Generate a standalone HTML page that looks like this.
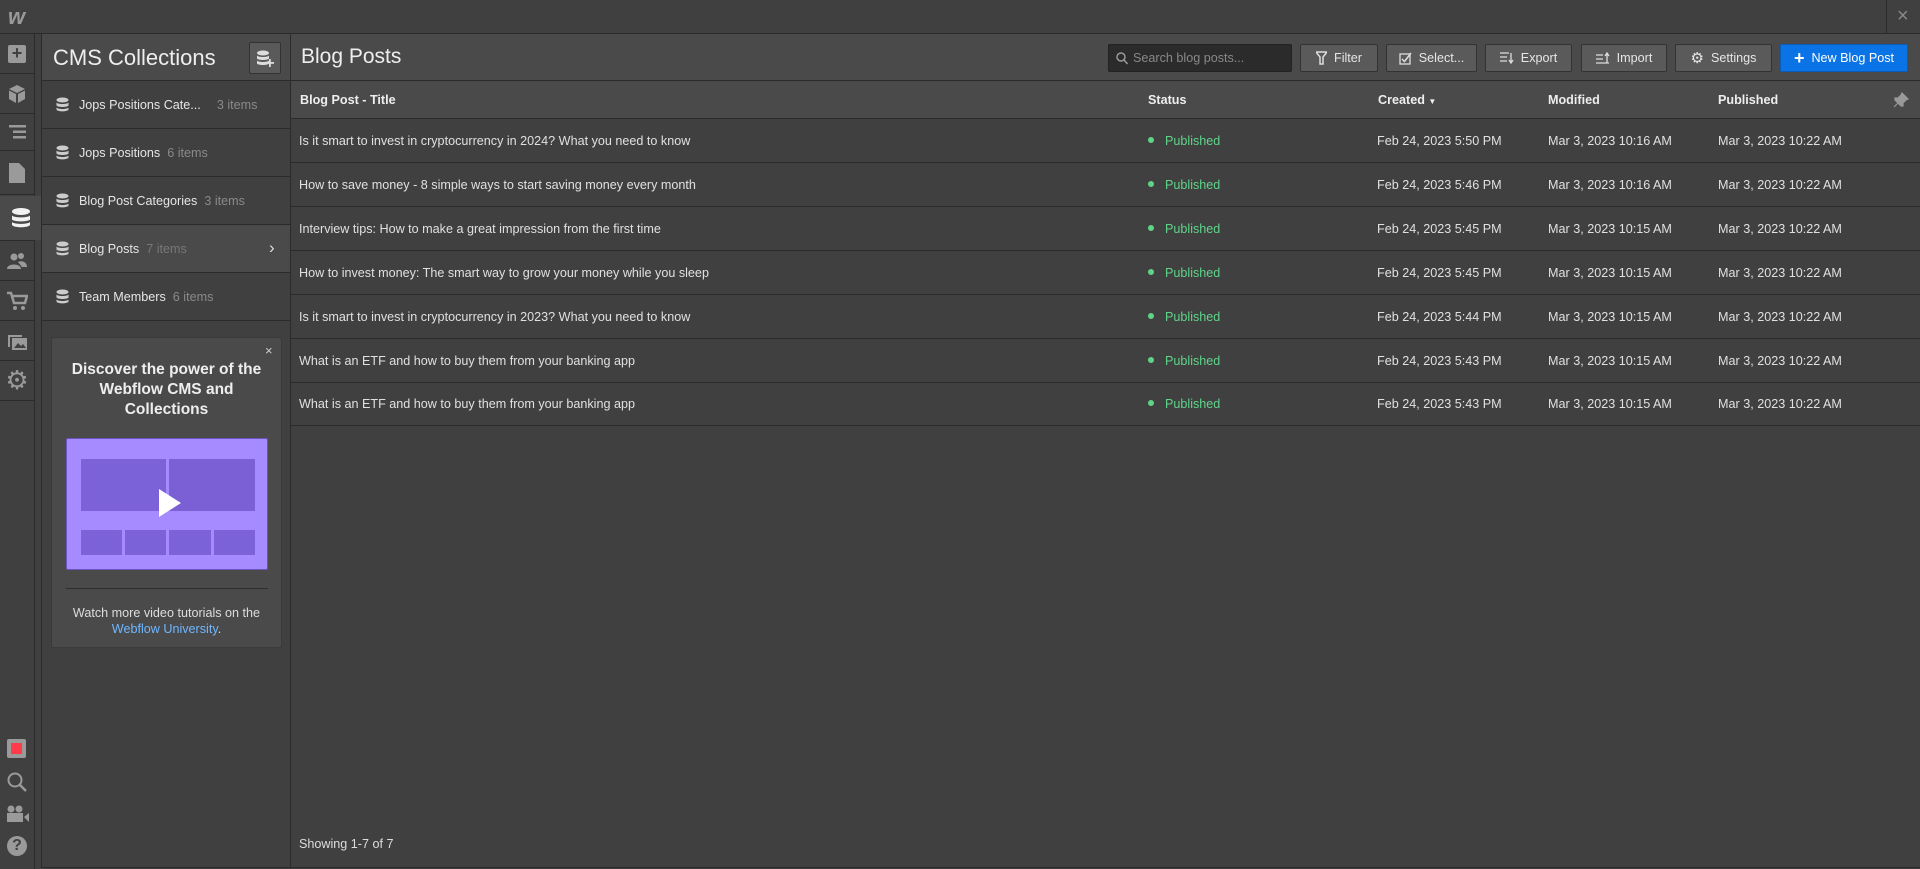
<!DOCTYPE html>
<html><head><meta charset="utf-8"><style>
*{box-sizing:border-box;margin:0;padding:0}
body{width:1920px;height:869px;overflow:hidden;background:#404040;font-family:"Liberation Sans",sans-serif;color:#e0e0e0;position:relative}
.abs{position:absolute}
.top{left:0;top:0;width:1920px;height:34px;background:#404040;border-bottom:1px solid #2b2b2b}
.lbar{left:0;top:34px;width:35px;height:835px;background:#404040;border-right:1px solid #2b2b2b}
.ic{position:absolute;left:0;width:34px;height:40px;border-bottom:1px solid #2b2b2b;display:flex;align-items:center;justify-content:center}
.side{left:41px;top:34px;width:250px;height:834px;background:#404040;border-left:1px solid #2b2b2b;border-right:1px solid #2b2b2b;border-bottom:1px solid #2b2b2b}
.sh{height:47px;background:#4a4a4a;border-bottom:1px solid #2b2b2b;position:relative}
.it{height:48px;border-bottom:1px solid #2b2b2b;display:flex;align-items:center;padding-left:14px;font-size:12.6px;color:#e6e6e6;position:relative}
.it .c{color:#8a8a8a;margin-left:7px}
.it svg{margin-right:10px}
.main{left:291px;top:34px;width:1629px;height:834px;border-bottom:1px solid #2b2b2b}
.mh{height:47px;background:#4a4a4a;border-bottom:1px solid #2b2b2b;position:relative}
.btn{position:absolute;top:10px;height:28px;background:#5a5a5a;border:1px solid #333;border-radius:2px;font-size:12.6px;color:#e6e6e6;display:flex;align-items:center;justify-content:center;gap:7px}
.th{height:38px;background:#4a4a4a;border-bottom:1px solid #2b2b2b;position:relative;font-size:12.6px;font-weight:bold;color:#eee}
.row{height:44px;border-bottom:1px solid #2b2b2b;position:relative;font-size:12.6px;color:#e0e0e0}
.th span,.row span{position:absolute;top:50%;transform:translateY(-50%);white-space:nowrap}
.pub{color:#5fd38a}
.pub:before{content:"";display:inline-block;width:6px;height:6px;border-radius:3px;background:#5fd38a;margin-right:11px;vertical-align:2px}
</style></head><body>
<div class="abs top">
 <div class="abs" style="left:8px;top:4px;font:italic bold 22px 'Liberation Sans',sans-serif;color:#9a9a9a">w</div>
 <div class="abs" style="left:1886px;top:0;width:1px;height:34px;background:#2b2b2b"></div>
 <div class="abs" style="left:1897px;top:5px;color:#8a8a8a;font-size:20px">×</div>
</div>
<div class="abs lbar">
 <div class="ic" style="top:0"><div style="width:18px;height:18px;background:#9a9a9a;border-radius:2px;color:#404040;font-weight:bold;font-size:18px;line-height:17px;text-align:center">+</div></div>
 <div class="ic" style="top:40px"><svg width="20" height="20" viewBox="0 0 20 20"><path d="M10 1 L18 5 L10 9 L2 5Z M2 6.5 L9 10 V19 L2 15Z M18 6.5 L11 10 V19 L18 15Z" fill="#9a9a9a"/></svg></div>
 <div class="ic" style="top:80px;height:37px"><svg width="20" height="16"><rect x="2" y="1" width="17" height="2.5" fill="#9a9a9a"/><rect x="6" y="6.5" width="13" height="2.5" fill="#9a9a9a"/><rect x="6" y="12" width="13" height="2.5" fill="#9a9a9a"/></svg></div>
 <div class="ic" style="top:117px;height:44px"><svg width="18" height="22"><path d="M1 1H11L17 7V21H1Z" fill="#9a9a9a"/></svg></div>
 <div class="ic" style="top:162px;height:44px;background:#4a4a4a;width:41px;border:none"><svg width="22" height="22"><g fill="#f2f2f2"><ellipse cx="11" cy="4.5" rx="9" ry="3.5"/><path d="M2 8.5c2 2.5 16 2.5 18 0v4c-2 2.5-16 2.5-18 0z"/><path d="M2 15c2 2.5 16 2.5 18 0v3c-2 3-16 3-18 0z"/></g></svg></div>
 <div class="ic" style="top:206px;height:41px;border-top:1px solid #2b2b2b"><svg width="22" height="18"><g fill="#9a9a9a"><circle cx="8" cy="5" r="3.5"/><circle cx="15" cy="4" r="3"/><path d="M1 17c0-6 14-6 14 0z"/><path d="M12 10c4-2 9 0 9 5h-5z"/></g></svg></div>
 <div class="ic" style="top:247px"><svg width="22" height="20"><path d="M1 2h4l3 10h11l2-7H6" fill="none" stroke="#9a9a9a" stroke-width="2.5"/><circle cx="9" cy="17" r="2" fill="#9a9a9a"/><circle cx="17" cy="17" r="2" fill="#9a9a9a"/></svg></div>
 <div class="ic" style="top:287px"><svg width="22" height="20"><path d="M2 4h14v2H4v10H2z" fill="#9a9a9a"/><rect x="6" y="7" width="15" height="12" fill="#9a9a9a"/><path d="M8 17l4-5 3 3 2-2 3 4z" fill="#404040"/></svg></div>
 <div class="ic" style="top:327px;font-size:26px;color:#9a9a9a">⚙</div>
 <div class="abs" style="left:7px;top:705px;width:19px;height:19px;background:#9a9a9a;border-radius:2px"><div style="margin:4px;width:11px;height:11px;background:#ff3b4a"></div></div>
 <svg class="abs" style="left:6px;top:737px" width="22" height="22"><circle cx="9" cy="9" r="6.5" fill="none" stroke="#9a9a9a" stroke-width="2"/><path d="M14 14l6 6" stroke="#9a9a9a" stroke-width="2.5"/></svg>
 <svg class="abs" style="left:6px;top:771px" width="24" height="18"><g fill="#9a9a9a"><circle cx="5" cy="4" r="3.5"/><circle cx="13" cy="4" r="3.5"/><rect x="1" y="8" width="16" height="9"/><path d="M18 12l5-4v9z"/></g></svg>
 <div class="abs" style="left:7px;top:802px;width:20px;height:20px;border-radius:10px;background:#9a9a9a;color:#404040;font-weight:bold;font-size:16px;text-align:center;line-height:20px">?</div>
</div>
<div class="abs side">
 <div class="sh"><div class="abs" style="left:11px;top:11px;font-size:22px;color:#eee">CMS Collections</div>
 <div class="abs" style="left:207px;top:8px;width:32px;height:32px;background:#5a5a5a;border:1px solid #333;border-radius:2px"><svg style="margin:7px 0 0 6px" width="20" height="18"><g fill="#ddd"><ellipse cx="7" cy="3" rx="6" ry="2.5"/><path d="M1 5.5c1 2 11 2 12 0v3c-1 2-11 2-12 0z"/><path d="M1 10.5c1 2 11 2 12 0v3c-1 2-11 2-12 0z"/><rect x="13" y="9" width="1.8" height="8"/><rect x="10" y="12" width="8" height="1.8"/></g></svg></div></div>
 <div class="it"><svg width="13" height="15"><g fill="#ccc"><ellipse cx="6.5" cy="3" rx="6" ry="2.5"/><path d="M.5 5.5c1 2 11 2 12 0v3c-1 2-11 2-12 0z"/><path d="M.5 10.5c1 2 11 2 12 0v2c-1 2.5-11 2.5-12 0z"/></g></svg>Jops Positions Cate...<span class="c" style="margin-left:16px">3 items</span></div>
 <div class="it"><svg width="13" height="15"><g fill="#ccc"><ellipse cx="6.5" cy="3" rx="6" ry="2.5"/><path d="M.5 5.5c1 2 11 2 12 0v3c-1 2-11 2-12 0z"/><path d="M.5 10.5c1 2 11 2 12 0v2c-1 2.5-11 2.5-12 0z"/></g></svg>Jops Positions<span class="c">6 items</span></div>
 <div class="it"><svg width="13" height="15"><g fill="#ccc"><ellipse cx="6.5" cy="3" rx="6" ry="2.5"/><path d="M.5 5.5c1 2 11 2 12 0v3c-1 2-11 2-12 0z"/><path d="M.5 10.5c1 2 11 2 12 0v2c-1 2.5-11 2.5-12 0z"/></g></svg>Blog Post Categories<span class="c">3 items</span></div>
 <div class="it" style="background:#4a4a4a"><svg width="13" height="15"><g fill="#ccc"><ellipse cx="6.5" cy="3" rx="6" ry="2.5"/><path d="M.5 5.5c1 2 11 2 12 0v3c-1 2-11 2-12 0z"/><path d="M.5 10.5c1 2 11 2 12 0v2c-1 2.5-11 2.5-12 0z"/></g></svg>Blog Posts<span class="c" style="color:#777">7 items</span><span class="abs" style="left:227px;top:13px;font-size:17px;color:#ddd">›</span></div>
 <div class="it"><svg width="13" height="15"><g fill="#ccc"><ellipse cx="6.5" cy="3" rx="6" ry="2.5"/><path d="M.5 5.5c1 2 11 2 12 0v3c-1 2-11 2-12 0z"/><path d="M.5 10.5c1 2 11 2 12 0v2c-1 2.5-11 2.5-12 0z"/></g></svg>Team Members<span class="c">6 items</span></div>
 <div class="abs" style="left:9px;top:303px;width:231px;height:311px;background:#4a4a4a;border:1px solid #3a3a3a;border-radius:2px">
  <div class="abs" style="left:213px;top:5px;color:#ccc;font-size:13px">×</div>
  <div class="abs" style="left:0;top:22px;width:229px;text-align:center;font-size:15.5px;font-weight:bold;line-height:20px;color:#eee">Discover the power of the<br>Webflow CMS and<br>Collections</div>
  <div class="abs" style="left:14px;top:100px;width:202px;height:132px;background:#a58bff;border:1px solid #6a55c0;border-radius:2px">
   <div class="abs" style="left:14px;top:20px;width:85px;height:52px;background:#7c62d8"></div>
   <div class="abs" style="left:102px;top:20px;width:86px;height:52px;background:#7a60d4"></div>
   <div class="abs" style="left:14px;top:91px;width:41px;height:25px;background:#7c62d8"></div>
   <div class="abs" style="left:58px;top:91px;width:41px;height:25px;background:#7c62d8"></div>
   <div class="abs" style="left:102px;top:91px;width:42px;height:25px;background:#7c62d8"></div>
   <div class="abs" style="left:147px;top:91px;width:41px;height:25px;background:#7c62d8"></div>
   <svg class="abs" style="left:92px;top:50px" width="24" height="30"><path d="M0 0L22 14L0 28Z" fill="#fff"/></svg>
  </div>
  <div class="abs" style="left:14px;top:250px;width:202px;height:1px;background:#2e2e2e"></div>
  <div class="abs" style="left:0;top:267px;width:229px;text-align:center;font-size:12.6px;line-height:16px;color:#ddd">Watch more video tutorials on the<br><span style="color:#6fb6ff">Webflow University</span>.</div>
 </div>
</div>
<div class="abs main">
 <div class="mh"><div class="abs" style="left:10px;top:11px;font-size:21px;color:#eee">Blog Posts</div>
  <div class="abs" style="left:817px;top:10px;width:184px;height:28px;background:#2b2b2b;border:1px solid #222;border-radius:2px;font-size:12.6px;color:#888;padding:6px 0 0 24px">Search blog posts...<svg class="abs" style="left:7px;top:7px" width="12" height="13"><circle cx="5" cy="5" r="4" fill="none" stroke="#999" stroke-width="1.5"/><path d="M8 8l3.5 4" stroke="#999" stroke-width="1.5"/></svg></div>
  <div class="btn" style="left:1009px;width:78px"><svg width="11" height="14"><path d="M0 1h11L7 6v7H4V6z" fill="none" stroke="#ddd" stroke-width="1.5"/></svg>Filter</div>
  <div class="btn" style="left:1095px;width:91px"><svg width="13" height="13"><rect x="1" y="2" width="10" height="10" fill="none" stroke="#ddd" stroke-width="1.3"/><path d="M3 7l2.5 2.5L12 1" fill="none" stroke="#ddd" stroke-width="1.5"/></svg>Select...</div>
  <div class="btn" style="left:1194px;width:87px"><svg width="14" height="12"><path d="M0 1h9M0 5h7M0 9h7M11 1v10M9 8l2 3 2-3" fill="none" stroke="#ddd" stroke-width="1.3"/></svg>Export</div>
  <div class="btn" style="left:1290px;width:86px"><svg width="14" height="12"><path d="M0 11h13M0 7h7M0 3h7M11 11V1M9 4l2-3 2 3" fill="none" stroke="#ddd" stroke-width="1.3"/></svg>Import</div>
  <div class="btn" style="left:1384px;width:97px"><span style="font-size:15px">⚙</span>Settings</div>
  <div class="btn" style="left:1489px;width:128px;background:#0a73e6;border-color:#0a5cb8;color:#fff"><span style="font-size:18px;font-weight:bold">+</span>New Blog Post</div>
 </div>
 <div class="th"><span style="left:9px">Blog Post - Title</span><span style="left:857px">Status</span><span style="left:1087px">Created <small style="font-size:8px">▼</small></span><span style="left:1257px">Modified</span><span style="left:1427px">Published</span><svg class="abs" style="left:1602px;top:11px" width="16" height="16"><path d="M9 1l6 6-2 1-3 3 0 3-2 0-6-6 0-2 3 0 3-3z M5 11l-4 4" fill="#999" stroke="#999" stroke-width="1.2"/></svg></div>
 <div class="row"><span style="left:8px">Is it smart to invest in cryptocurrency in 2024? What you need to know</span><span class="pub" style="left:857px">Published</span><span style="left:1086px">Feb 24, 2023 5:50 PM</span><span style="left:1257px">Mar 3, 2023 10:16 AM</span><span style="left:1427px">Mar 3, 2023 10:22 AM</span></div>
 <div class="row"><span style="left:8px">How to save money - 8 simple ways to start saving money every month</span><span class="pub" style="left:857px">Published</span><span style="left:1086px">Feb 24, 2023 5:46 PM</span><span style="left:1257px">Mar 3, 2023 10:16 AM</span><span style="left:1427px">Mar 3, 2023 10:22 AM</span></div>
 <div class="row"><span style="left:8px">Interview tips: How to make a great impression from the first time</span><span class="pub" style="left:857px">Published</span><span style="left:1086px">Feb 24, 2023 5:45 PM</span><span style="left:1257px">Mar 3, 2023 10:15 AM</span><span style="left:1427px">Mar 3, 2023 10:22 AM</span></div>
 <div class="row"><span style="left:8px">How to invest money: The smart way to grow your money while you sleep</span><span class="pub" style="left:857px">Published</span><span style="left:1086px">Feb 24, 2023 5:45 PM</span><span style="left:1257px">Mar 3, 2023 10:15 AM</span><span style="left:1427px">Mar 3, 2023 10:22 AM</span></div>
 <div class="row"><span style="left:8px">Is it smart to invest in cryptocurrency in 2023? What you need to know</span><span class="pub" style="left:857px">Published</span><span style="left:1086px">Feb 24, 2023 5:44 PM</span><span style="left:1257px">Mar 3, 2023 10:15 AM</span><span style="left:1427px">Mar 3, 2023 10:22 AM</span></div>
 <div class="row"><span style="left:8px">What is an ETF and how to buy them from your banking app</span><span class="pub" style="left:857px">Published</span><span style="left:1086px">Feb 24, 2023 5:43 PM</span><span style="left:1257px">Mar 3, 2023 10:15 AM</span><span style="left:1427px">Mar 3, 2023 10:22 AM</span></div>
 <div class="row" style="height:43px"><span style="left:8px">What is an ETF and how to buy them from your banking app</span><span class="pub" style="left:857px">Published</span><span style="left:1086px">Feb 24, 2023 5:43 PM</span><span style="left:1257px">Mar 3, 2023 10:15 AM</span><span style="left:1427px">Mar 3, 2023 10:22 AM</span></div>
 <div class="abs" style="left:8px;top:803px;font-size:12.6px;color:#ddd">Showing 1-7 of 7</div>
</div>
</body></html>
